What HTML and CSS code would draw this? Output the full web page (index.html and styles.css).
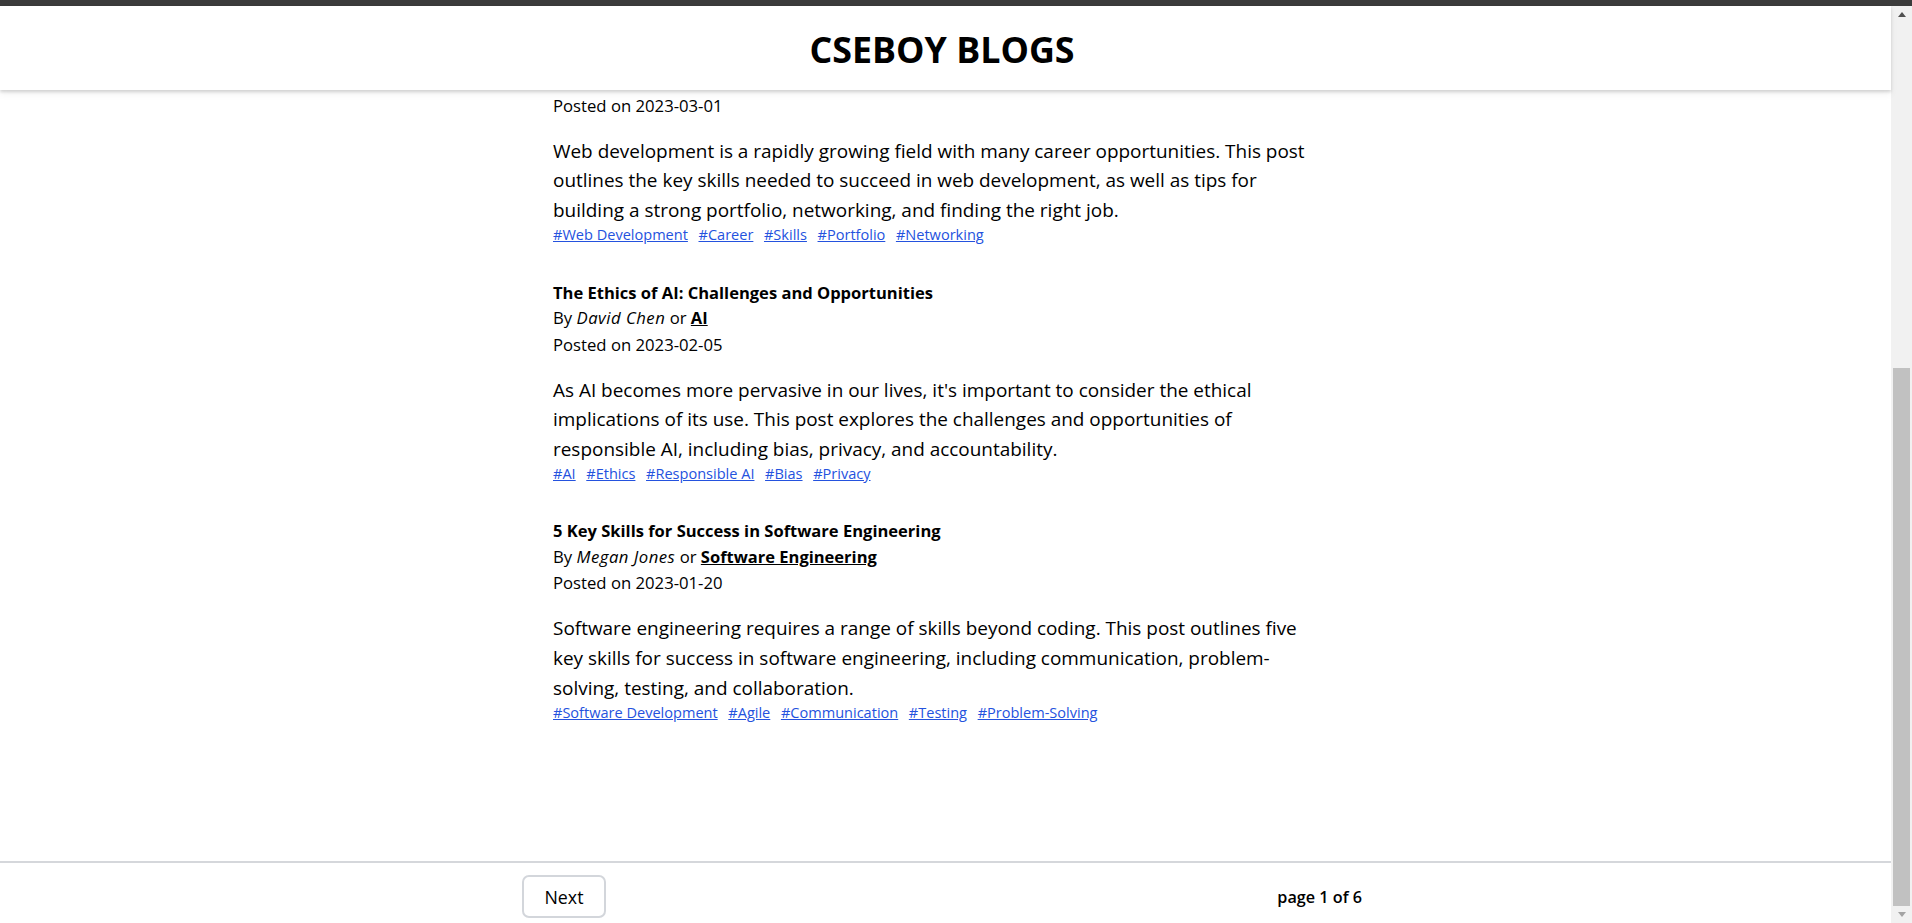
FILE: index.html
```html
<!DOCTYPE html>
<html lang="en">
<head>
<meta charset="utf-8">
<title>CSEBOY BLOGS</title>
<link rel="stylesheet" href="styles.css">
</head>
<body>
<div class="topbar"></div>
<div class="window">
  <div class="page">
    <header class="header">
      <h1 class="brand">CSEBOY BLOGS</h1>
    </header>
    <main class="scroller">
      <section class="posts">
        <article class="post">
          <div class="date">Posted on 2023-03-01</div>
          <p class="summary">Web development is a rapidly growing field with many career opportunities. This post outlines the key skills needed to succeed in web development, as well as tips for building a strong portfolio, networking, and finding the right job.</p>
          <div class="tags"><a href="#">#Web Development</a><a href="#">#Career</a><a href="#">#Skills</a><a href="#">#Portfolio</a><a href="#">#Networking</a></div>
        </article>
        <article class="post">
          <h2 class="post-title">The Ethics of AI: Challenges and Opportunities</h2>
          <div class="byline">By <em>David Chen</em> or <a href="#">AI</a></div>
          <div class="date">Posted on 2023-02-05</div>
          <p class="summary">As AI becomes more pervasive in our lives, it's important to consider the ethical implications of its use. This post explores the challenges and opportunities of responsible AI, including bias, privacy, and accountability.</p>
          <div class="tags"><a href="#">#AI</a><a href="#">#Ethics</a><a href="#">#Responsible AI</a><a href="#">#Bias</a><a href="#">#Privacy</a></div>
        </article>
        <article class="post">
          <h2 class="post-title">5 Key Skills for Success in Software Engineering</h2>
          <div class="byline">By <em>Megan Jones</em> or <a href="#">Software Engineering</a></div>
          <div class="date">Posted on 2023-01-20</div>
          <p class="summary">Software engineering requires a range of skills beyond coding. This post outlines five key skills for success in software engineering, including communication, problem-solving, testing, and collaboration.</p>
          <div class="tags"><a href="#">#Software Development</a><a href="#">#Agile</a><a href="#">#Communication</a><a href="#">#Testing</a><a href="#">#Problem-Solving</a></div>
        </article>
      </section>
      <footer class="footer">
        <div class="footer-inner">
          <button class="next-btn" type="button">Next</button>
          <span class="page-count">page 1 of 6</span>
        </div>
      </footer>
    </main>
  </div>
  <div class="scrollbar" aria-hidden="true">
    <div class="sb-btn"><span class="arrow-up"></span></div>
    <div class="sb-track"><div class="sb-thumb"></div></div>
    <div class="sb-btn"><span class="arrow-down"></span></div>
  </div>
</div>
</body>
</html>
```
FILE: styles.css
```css
* { box-sizing: border-box; }

html, body {
  height: 100%;
}

body {
  margin: 0;
  display: flex;
  flex-direction: column;
  overflow: hidden;
  font-family: "Open Sans", "Noto Sans", sans-serif;
  color: #000;
  background: #fff;
}

.topbar {
  flex: none;
  height: 6px;
  background: #3b3b3b;
}

.window {
  flex: 1;
  min-height: 0;
  display: flex;
}

.page {
  flex: 1;
  min-width: 0;
  display: flex;
  flex-direction: column;
}

.header {
  flex: none;
  height: 84px;
  padding: 3px 7px 0 0;
  display: flex;
  align-items: center;
  justify-content: center;
  background: #fff;
  position: relative;
  z-index: 1;
  box-shadow: 0 2px 3px rgba(0, 0, 0, 0.15), 0 4px 8px rgba(0, 0, 0, 0.05);
}

.brand {
  margin: 0;
  font-size: 35.8px;
  line-height: 1;
  font-weight: 700;
}

.scroller {
  flex: 1;
  min-height: 0;
  overflow: hidden;
  display: flex;
  flex-direction: column;
  justify-content: flex-end;
}

.posts {
  flex: none;
  padding: 0 7px 140.9px 0;
}

.posts > .post {
  width: 840px;
  margin-left: auto;
  margin-right: auto;
  padding-left: 31px;
}

.post + .post {
  margin-top: 37.2px;
}

.post > * {
  max-width: 768px;
}

.post-title {
  margin: 0;
  font-size: 16.55px;
  line-height: 26.4px;
  font-weight: 700;
}

.byline {
  font-size: 16.7px;
  line-height: 24.6px;
}

.byline em {
  font-style: italic;
  letter-spacing: 0.5px;
}

.byline a {
  color: #000;
  font-weight: 700;
  font-size: 16.5px;
  text-decoration: underline;
}

.date {
  font-size: 16.7px;
  line-height: 28px;
}

.summary {
  margin: 17px 0 0;
  font-size: 18.95px;
  line-height: 29.7px;
}

.tags {
  display: flex;
  flex-wrap: wrap;
  gap: 0 10.6px;
  font-size: 14.56px;
  line-height: 16.6px;
}

.tags a {
  color: #2452de;
  text-decoration: underline;
}

.footer {
  flex: none;
  border-top: 2px solid #d5d7db;
  padding: 12px 7px 5px 0;
}

.footer-inner {
  width: 840px;
  margin: 0 auto;
  display: flex;
  align-items: center;
  justify-content: space-between;
}

.next-btn {
  width: 84px;
  height: 43px;
  border: 2px solid #d3d6db;
  border-radius: 7px;
  background: #fff;
  font-family: inherit;
  font-size: 17.8px;
  color: #000;
  padding: 0;
}

.page-count {
  font-size: 16.2px;
  font-weight: 600;
}

.scrollbar {
  flex: none;
  width: 21px;
  display: flex;
  flex-direction: column;
  background: #f1f1f1;
}

.sb-btn {
  flex: none;
  height: 17px;
  display: flex;
  align-items: center;
  justify-content: center;
}

.arrow-up {
  width: 0;
  height: 0;
  border-left: 4.5px solid transparent;
  border-right: 4.5px solid transparent;
  border-bottom: 5px solid #505050;
}

.arrow-down {
  width: 0;
  height: 0;
  border-left: 4.5px solid transparent;
  border-right: 4.5px solid transparent;
  border-top: 5px solid #a3a3a3;
}

.sb-track {
  flex: 1;
  display: flex;
  flex-direction: column;
  justify-content: flex-end;
  padding: 0 2px;
}

.sb-thumb {
  height: 538px;
  background: #c1c1c1;
}
```
